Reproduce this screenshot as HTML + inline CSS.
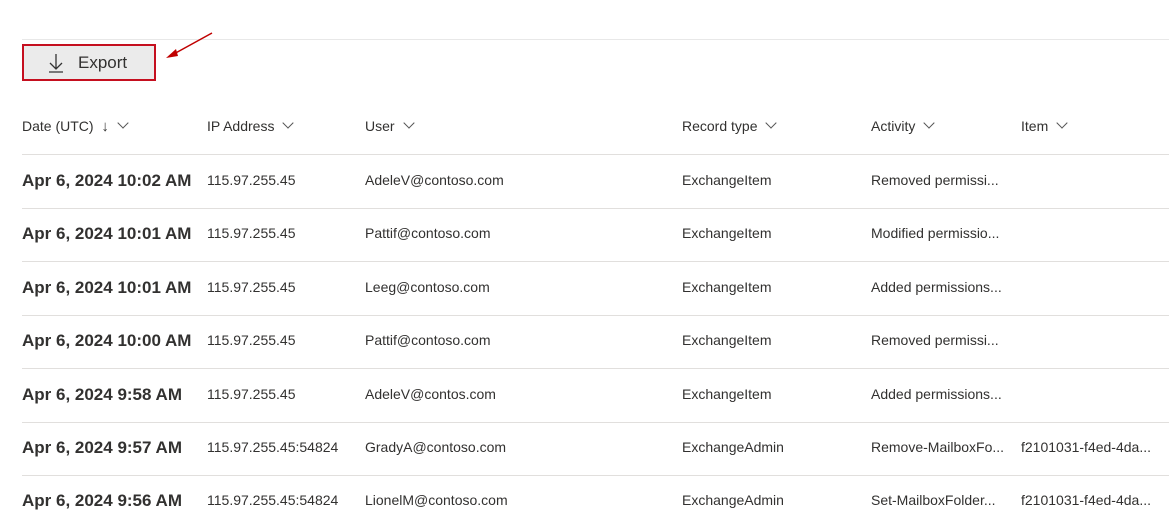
<!DOCTYPE html>
<html><head><meta charset="utf-8"><style>
body{margin:0;width:1169px;height:521px;background:#fff;font-family:"Liberation Sans",sans-serif;color:#323130;position:relative;overflow:hidden}
.a{position:absolute;white-space:nowrap}
.line{position:absolute;left:22px;right:0;height:1px;background:#e1dfdd}
.btn{position:absolute;left:22px;top:44px;width:130px;height:33px;border:2px solid #c50f1f;background:#ebebeb}
.h{font-size:14px;top:118px}
.d{font-size:17px;font-weight:bold;color:#323130;left:22px}
.c{font-size:14px}
.chev{display:inline-block;width:7px;height:7px;border-right:1px solid #555;border-bottom:1px solid #555;transform:rotate(45deg);margin-left:10px;position:relative;top:-4px}
</style></head><body>
<div class="line" style="top:39px;background:#e8e8e8"></div>
<div class="btn"></div>
<svg class="a" style="left:46px;top:52px" width="20" height="22"><path d="M10 2V17M4 11L10 17L16 11M3 20H17" stroke="#333" stroke-width="1.3" fill="none"/></svg>
<div class="a" style="left:78px;top:53px;font-size:17px;color:#323130">Export</div>
<svg class="a" style="left:160px;top:28px" width="60" height="34"><path d="M52 5L12 27" stroke="#c00000" stroke-width="1.5"/><path d="M6 30L16 21L18 28Z" fill="#c00000"/></svg>
<div class="a h" style="left:22px">Date (UTC) &nbsp;<span style="font-size:15px;font-weight:lighter">↓</span><span class="chev"></span></div>
<div class="a h" style="left:207px">IP Address<span class="chev"></span></div>
<div class="a h" style="left:365px">User<span class="chev"></span></div>
<div class="a h" style="left:682px">Record type<span class="chev"></span></div>
<div class="a h" style="left:871px">Activity<span class="chev"></span></div>
<div class="a h" style="left:1021px">Item<span class="chev"></span></div>
<div class="line" style="top:154px"></div>
<div class="line" style="top:208px"></div>
<div class="line" style="top:261px"></div>
<div class="line" style="top:315px"></div>
<div class="line" style="top:368px"></div>
<div class="line" style="top:422px"></div>
<div class="line" style="top:475px"></div>

<div class="a d" style="top:171px">Apr 6, 2024 10:02 AM</div>
<div class="a c" style="top:172px;left:207px">115.97.255.45</div>
<div class="a c" style="top:172px;left:365px">AdeleV@contoso.com</div>
<div class="a c" style="top:172px;left:682px">ExchangeItem</div>
<div class="a c" style="top:172px;left:871px">Removed permissi...</div>

<div class="a d" style="top:224px">Apr 6, 2024 10:01 AM</div>
<div class="a c" style="top:225px;left:207px">115.97.255.45</div>
<div class="a c" style="top:225px;left:365px">Pattif@contoso.com</div>
<div class="a c" style="top:225px;left:682px">ExchangeItem</div>
<div class="a c" style="top:225px;left:871px">Modified permissio...</div>

<div class="a d" style="top:278px">Apr 6, 2024 10:01 AM</div>
<div class="a c" style="top:279px;left:207px">115.97.255.45</div>
<div class="a c" style="top:279px;left:365px">Leeg@contoso.com</div>
<div class="a c" style="top:279px;left:682px">ExchangeItem</div>
<div class="a c" style="top:279px;left:871px">Added permissions...</div>

<div class="a d" style="top:331px">Apr 6, 2024 10:00 AM</div>
<div class="a c" style="top:332px;left:207px">115.97.255.45</div>
<div class="a c" style="top:332px;left:365px">Pattif@contoso.com</div>
<div class="a c" style="top:332px;left:682px">ExchangeItem</div>
<div class="a c" style="top:332px;left:871px">Removed permissi...</div>

<div class="a d" style="top:385px">Apr 6, 2024 9:58 AM</div>
<div class="a c" style="top:386px;left:207px">115.97.255.45</div>
<div class="a c" style="top:386px;left:365px">AdeleV@contos.com</div>
<div class="a c" style="top:386px;left:682px">ExchangeItem</div>
<div class="a c" style="top:386px;left:871px">Added permissions...</div>

<div class="a d" style="top:438px">Apr 6, 2024 9:57 AM</div>
<div class="a c" style="top:439px;left:207px">115.97.255.45:54824</div>
<div class="a c" style="top:439px;left:365px">GradyA@contoso.com</div>
<div class="a c" style="top:439px;left:682px">ExchangeAdmin</div>
<div class="a c" style="top:439px;left:871px">Remove-MailboxFo...</div>
<div class="a c" style="top:439px;left:1021px">f2101031-f4ed-4da...</div>

<div class="a d" style="top:491px">Apr 6, 2024 9:56 AM</div>
<div class="a c" style="top:492px;left:207px">115.97.255.45:54824</div>
<div class="a c" style="top:492px;left:365px">LionelM@contoso.com</div>
<div class="a c" style="top:492px;left:682px">ExchangeAdmin</div>
<div class="a c" style="top:492px;left:871px">Set-MailboxFolder...</div>
<div class="a c" style="top:492px;left:1021px">f2101031-f4ed-4da...</div>
</body></html>
